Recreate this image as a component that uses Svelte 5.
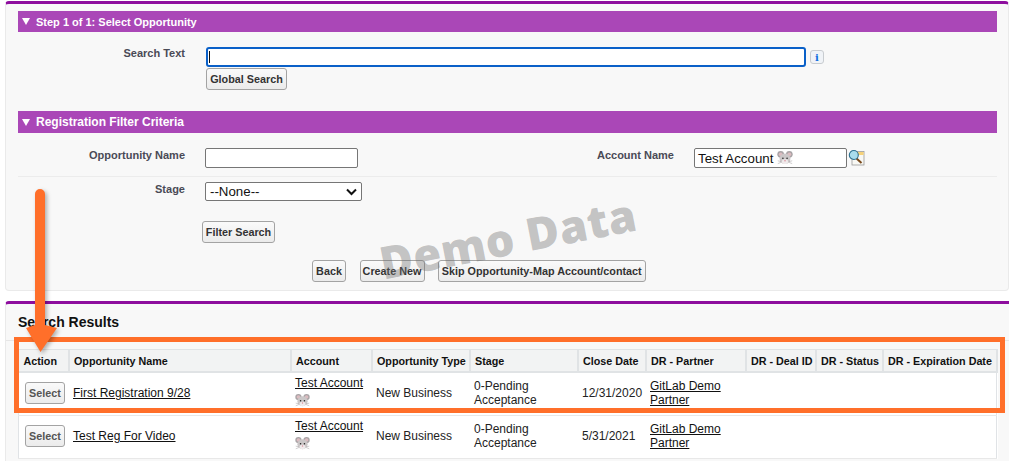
<script>
  const columns = [
    { label: 'Action', width: 50 },
    { label: 'Opportunity Name', width: 222 },
    { label: 'Account', width: 81 },
    { label: 'Opportunity Type', width: 98 },
    { label: 'Stage', width: 108 },
    { label: 'Close Date', width: 68 },
    { label: 'DR - Partner', width: 100 },
    { label: 'DR - Deal ID', width: 70 },
    { label: 'DR - Status', width: 67 },
    { label: 'DR - Expiration Date', width: 114 }
  ];
  const rows = [
    { name: 'First Registration 9/28', close: '12/31/2020' },
    { name: 'Test Reg For Video', close: '5/31/2021' }
  ];
</script>

{#snippet mouse(size)}
  <svg class="mouse" width={size} height={size} viewBox="0 0 20 20" aria-hidden="true">
    <circle cx="4.6" cy="5.4" r="4.2" fill="#a9a4a6" />
    <circle cx="15.4" cy="5.4" r="4.2" fill="#a9a4a6" />
    <circle cx="4.6" cy="5.4" r="2.4" fill="#dcbcc0" />
    <circle cx="15.4" cy="5.4" r="2.4" fill="#dcbcc0" />
    <ellipse cx="10" cy="11" rx="6.8" ry="6.6" fill="#cbc7c8" />
    <ellipse cx="10" cy="14.6" rx="3.8" ry="3" fill="#f0ebec" />
    <circle cx="7.4" cy="10.4" r="1" fill="#222" />
    <circle cx="12.6" cy="10.4" r="1" fill="#222" />
    <circle cx="10" cy="13.4" r="1" fill="#d98f9c" />
    <path d="M1 13.5l4 1M1 17l4-1.500M19 13.5l-4 1M19 17l-4-1.500" stroke="#9a9698" stroke-width=".6" />
  </svg>
{/snippet}

<main class="page">
  <section class="panel top-panel">
    <h2 class="band"><span class="tri"></span>Step 1 of 1: Select Opportunity</h2>
    <div class="search-row">
      <span class="label wide">Search Text</span>
      <div class="search-stack">
        <div class="search-line">
          <div class="focus-input"><span class="caret"></span></div>
          <span class="info">i</span>
        </div>
        <button class="btn global">Global Search</button>
      </div>
    </div>

    <h2 class="band second"><span class="tri"></span>Registration Filter Criteria</h2>
    <div class="filter-row">
      <span class="label wide">Opportunity Name</span>
      <div class="text-input opp"></div>
      <span class="label account-label">Account Name</span>
      <div class="text-input account">Test Account {@render mouse(16)}</div>
      <svg class="lookup" width="17" height="17" viewBox="0 0 17 17" aria-hidden="true">
        <rect x="4" y="2.5" width="12" height="13.5" fill="#f8f8f4" stroke="#9a9a9a" stroke-width=".8" />
        <rect x="9" y="3" width="6.6" height="3" fill="#f6d27a" />
        <path d="M8 9l5.500 5" stroke="#7a4a1c" stroke-width="2" />
        <circle cx="5.800" cy="6" r="4.500" fill="#a9dcec" stroke="#2d6f8e" stroke-width="1.100" />
      </svg>
    </div>
    <div class="divider"></div>
    <div class="stage-row">
      <span class="label wide">Stage</span>
      <div class="select">--None--
        <svg width="11" height="8" viewBox="0 0 11 8" aria-hidden="true"><path d="M1 1.500l4.500 4.500 4.500-4.500" fill="none" stroke="#111" stroke-width="2" /></svg>
      </div>
    </div>
    <button class="btn filter">Filter Search</button>
    <div class="actions">
      <button class="btn back">Back</button>
      <button class="btn create">Create New</button>
      <button class="btn skip">Skip Opportunity-Map Account/contact</button>
    </div>
  </section>

  <section class="panel results-panel">
    <h2 class="results-title">Search Results</h2>
    <div class="results-rule"></div>
    <table>
      <colgroup>
        {#each columns as col}<col style:width="{col.width}px" />{/each}
      </colgroup>
      <thead>
        <tr>{#each columns as col}<th>{col.label}</th>{/each}</tr>
      </thead>
      <tbody>
        {#each rows as row}
          <tr>
            <td class="action"><button class="btn select-btn">Select</button></td>
            <td><a href="#top">{row.name}</a></td>
            <td class="acct"><a href="#top">Test Account<br />{@render mouse(15)}</a></td>
            <td>New Business</td>
            <td>0-Pending<br />Acceptance</td>
            <td>{row.close}</td>
            <td><a href="#top">GitLab Demo<br />Partner</a></td>
            <td></td>
            <td></td>
            <td></td>
          </tr>
        {/each}
      </tbody>
    </table>
  </section>

  <div class="watermark">Demo Data</div>
  <div class="highlight"></div>
  <svg class="arrow" width="60" height="180" viewBox="0 0 60 180" aria-hidden="true">
    <path d="M15 7a5 5 0 0 1 10 0V138L37 141 20.500 165 6 141 15 138Z" fill="#ff6f2a" />
  </svg>
</main>

<style>
  :global(body) {
    margin: 0;
    background: #fff;
  }
  .page {
    position: relative;
    width: 1009px;
    height: 461px;
    overflow: hidden;
    padding-top: 1px;
    box-sizing: border-box;
    font-family: "Liberation Sans", Arial, sans-serif;
    font-size: 12px;
    color: #111;
  }
  .panel {
    margin-left: 5px;
    background: #f8f8f8;
    border: 1px solid #eaeaea;
    border-top: 3px solid #8e0e9e;
    border-radius: 4px;
    box-sizing: border-box;
    padding-left: 12px;
    padding-right: 11px;
  }
  .top-panel {
    height: 290px;
    padding-top: 7px;
  }
  .band {
    display: flex;
    align-items: center;
    height: 21px;
    margin: 0;
    padding-left: 4px;
    background: #aa47b7;
    color: #fff;
    font-size: 11px;
    font-weight: bold;
  }
  .band.second {
    height: 22px;
    margin-top: 21px;
    font-size: 12px;
  }
  .tri {
    width: 0;
    height: 0;
    margin-right: 6px;
    border-left: 4.500px solid transparent;
    border-right: 4.500px solid transparent;
    border-top: 7px solid #fff;
  }
  .label {
    color: #4a4a56;
    font-size: 11px;
    font-weight: bold;
    text-align: right;
    flex: none;
  }
  .label.wide {
    width: 167px;
  }
  .search-row {
    display: flex;
    margin-top: 15px;
    height: 43px;
  }
  .search-stack {
    margin-left: 21px;
  }
  .search-line {
    display: flex;
    align-items: center;
    gap: 4px;
  }
  .focus-input {
    width: 600px;
    height: 20px;
    box-sizing: border-box;
    background: #fff;
    border: 2px solid #0a60c8;
    border-radius: 3px;
    padding: 2px 1px;
  }
  .caret {
    display: block;
    width: 1px;
    height: 12px;
    background: #111;
  }
  .info {
    width: 14px;
    height: 14px;
    box-sizing: border-box;
    display: grid;
    place-items: center;
    background: #f0f3f7;
    border: 1px solid #c8ccd0;
    border-radius: 3px;
    color: #0f6fe0;
    font: bold 10px "DejaVu Serif", serif;
  }
  .btn {
    display: inline-block;
    height: 22px;
    padding: 0;
    box-sizing: border-box;
    background: linear-gradient(#fafafa, #ebebeb);
    border: 1px solid #a3a3a3;
    border-radius: 3px;
    color: #333;
    font-family: "Liberation Sans", Arial, sans-serif;
    font-size: 10.800px;
    font-weight: bold;
    white-space: nowrap;
  }
  .global {
    display: block;
    width: 81px;
    margin-top: 1px;
  }
  .filter-row {
    display: flex;
    align-items: flex-start;
    margin-top: 15px;
    height: 28px;
  }
  .text-input {
    height: 20px;
    box-sizing: border-box;
    background: #fff;
    border: 1px solid #767676;
    border-radius: 2px;
  }
  .opp {
    width: 153px;
    margin-left: 20px;
    flex: none;
  }
  .account-label {
    width: 316px;
  }
  .account {
    display: flex;
    align-items: center;
    flex: none;
    width: 153px;
    margin-left: 20px;
    padding-left: 3px;
    font-size: 13.300px;
    white-space: pre;
  }
  .lookup {
    flex: none;
    margin-left: 1px;
    margin-top: 1px;
  }
  .filter-row .label,
  .stage-row .label {
    margin-top: 1px;
  }
  .divider {
    height: 1px;
    background: #ececec;
  }
  .stage-row {
    display: flex;
    margin-top: 5px;
  }
  .select {
    display: flex;
    align-items: center;
    justify-content: space-between;
    width: 157px;
    height: 19px;
    box-sizing: border-box;
    margin-left: 20px;
    padding: 0 4px;
    background: #fff;
    border: 1px solid #767676;
    border-radius: 2px;
    font-size: 13.300px;
  }
  .filter {
    display: block;
    width: 73px;
    margin: 20px 0 0 184px;
  }
  .actions {
    display: flex;
    gap: 13.500px;
    margin: 17px 0 0 294px;
  }
  .back {
    width: 34px;
  }
  .create {
    width: 65px;
  }
  .skip {
    width: 207.500px;
  }
  .results-panel {
    height: 170px;
    margin-top: 10px;
    padding-right: 0;
    border-bottom: 0;
    border-right: 0;
    border-radius: 4px 0 0 0;
  }
  .results-title {
    margin: 0;
    padding-top: 10px;
    height: 26px;
    font-size: 14px;
    color: #111;
  }
  .results-rule {
    height: 1px;
    margin: 0 -12px;
    background: #e6e6e6;
  }
  table {
    table-layout: fixed;
    width: 978px;
    margin-top: 8px;
    border-collapse: collapse;
    background: #fff;
    border: 1px solid #e0e3e6;
  }
  th {
    height: 21px;
    padding: 0 5px 0 4.500px;
    background: #f2f3f3;
    border: 1px solid #e0e3e5;
    border-width: 1px 2px 2px 1px;
    color: #111;
    font-size: 10.750px;
    font-weight: bold;
    text-align: left;
    white-space: nowrap;
  }
  td {
    box-sizing: border-box;
    height: 43px;
    padding: 0 5px 1px 4.500px;
    border-bottom: 1px solid #e8e8e8;
    vertical-align: middle;
    line-height: 14px;
    color: #222;
  }
  td a {
    color: #111;
    text-decoration: underline;
  }
  td.acct {
    vertical-align: top;
    padding-top: 3px;
    padding-bottom: 0;
  }
  .acct a {
    display: block;
  }
  .mouse {
    display: inline-block;
    vertical-align: -3px;
  }
  .acct .mouse {
    vertical-align: baseline;
    margin-top: 3px;
  }
  .action {
    padding-left: 6px;
  }
  .select-btn {
    display: block;
    width: 40px;
    height: 22px;
    color: #555;
  }
  .watermark {
    position: absolute;
    left: 380px;
    top: 238px;
    transform: rotate(-11deg);
    transform-origin: left center;
    font-family: "Open Sans", "DejaVu Sans", sans-serif;
    font-size: 45px;
    line-height: 50px;
    font-weight: 800;
    letter-spacing: .5px;
    color: rgba(110, 110, 110, .4);
    white-space: nowrap;
    pointer-events: none;
  }
  .highlight {
    position: absolute;
    left: 14px;
    top: 337px;
    width: 991px;
    height: 76px;
    box-sizing: border-box;
    border: 5px solid #ff6f2a;
    pointer-events: none;
  }
  .arrow {
    position: absolute;
    left: 20px;
    top: 187px;
    filter: drop-shadow(2px 2px 2px rgba(0, 0, 0, .3));
    pointer-events: none;
  }
</style>
